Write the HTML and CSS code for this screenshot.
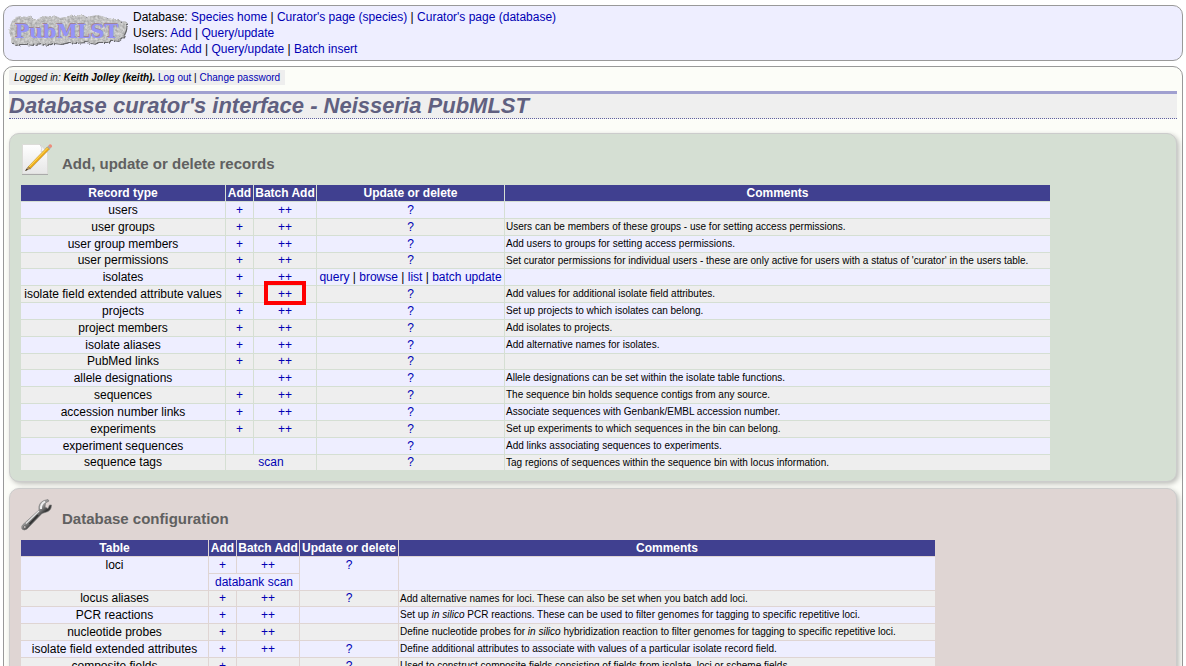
FILE: index.html
```html
<!DOCTYPE html>
<html lang="en">
<head>
<meta charset="utf-8">
<title>Database curator's interface - Neisseria PubMLST</title>
<link rel="stylesheet" href="styles.css">
</head>
<body>
<header class="banner">
  <a class="logo" href="#" aria-label="PubMLST">
    <svg width="122" height="36" viewBox="0 0 122 36">
      <defs>
        <filter id="grain" x="-5%" y="-10%" width="110%" height="125%" color-interpolation-filters="sRGB">
          <feTurbulence type="fractalNoise" baseFrequency="0.4" numOctaves="2" seed="4" result="noise"/>
          <feDisplacementMap in="SourceGraphic" in2="noise" scale="3" xChannelSelector="R" yChannelSelector="G" result="shape"/>
          <feColorMatrix in="noise" type="matrix" values="0.35 0 0 0 0.58  0.35 0 0 0 0.58  0.35 0 0 0 0.58  0 0 0 0 1" result="grey"/>
          <feComposite in="grey" in2="shape" operator="in" result="rock"/>
          <feDropShadow in="rock" dx="1" dy="1" stdDeviation="0.4" flood-color="#444" flood-opacity="0.8"/>
        </filter>
      </defs>
      <path filter="url(#grain)" d="M4 8 L8 4 13 3 19 4 22 2 25 6 30 6 34 3 44 4 48 3 52 5 60 3 67 2 75 2 79 4 88 2 94 3 99 5 105 6 110 6 113 9 117 8 119 10 118 17 115 24 110 28 104 27 100 29 90 29 86 31 78 29 67 30 61 29 53 31 45 30 39 32 32 30 24 32 18 31 12 31 7 32 3 29 3 24 1 19 2 13Z"/>
      <text class="logo-shade" x="6" y="24">PubMLST</text>
      <text class="logo-text" x="7" y="25">PubMLST</text>
    </svg>
  </a>
  <nav class="menu">
    <div>Database: <a href="#">Species home</a> | <a href="#">Curator's page (species)</a> | <a href="#">Curator's page (database)</a></div>
    <div>Users: <a href="#">Add</a> | <a href="#">Query/update</a></div>
    <div>Isolates: <a href="#">Add</a> | <a href="#">Query/update</a> | <a href="#">Batch insert</a></div>
  </nav>
</header>
<main class="content">
  <div class="login"><i>Logged in: <b>Keith Jolley (keith).</b></i> <a href="#">Log out</a> | <a href="#">Change password</a></div>
  <h1>Database curator's interface - Neisseria PubMLST</h1>

  <section class="panel curate">
    <div class="panel-head">
      <svg width="32" height="34" viewBox="0 0 32 34">
        <defs>
          <linearGradient id="paper" x1="0" y1="0" x2="0" y2="1"><stop offset="0" stop-color="#fff"/><stop offset="1" stop-color="#e6e6e6"/></linearGradient>
        </defs>
        <path d="M1.500 1.500H19L26.500 9V31H1.500Z" fill="url(#paper)" stroke="#dcdcd8"/>
        <path d="M1 31.500H27" stroke="#aaa"/>
        <path d="M19 1.500Q22 5 20 9 24 7.500 26.500 9Z" fill="#f5f5f5" stroke="#ccc" stroke-width=".7"/>
        <path d="M8 26 25 8" stroke="#777" stroke-width="3" opacity=".2"/>
        <path d="M7.200 23.800 26.300 4 28.500 6 9.400 25.500Z" fill="#f0ae18" stroke="#b47b12" stroke-width=".5"/>
        <path d="M8 23.800 26.700 4.800" stroke="#ffe36a"/>
        <path d="M4.500 27.500 7.200 23.800 9.400 25.500Z" fill="#c79a55" stroke="#79602f" stroke-width=".5"/>
        <path d="M4.200 28 5.800 25.700 6.800 26.700Z" fill="#222"/>
        <path d="M26.100 4.200 27.600 2.600 30.100 4.800 28.600 6.300Z" fill="#aaa"/>
        <path d="M27.400 2.800Q29 .4 30.700 2 32 3.500 29.900 5Z" fill="#ed8d7b"/>
      </svg>
      <h2>Add, update or delete records</h2>
    </div>
    <table class="grid records">
      <colgroup><col class="c-record"><col class="c-add"><col class="c-batch"><col class="c-update"><col class="c-comment"></colgroup>
      <thead><tr><th>Record type</th><th>Add</th><th>Batch Add</th><th>Update or delete</th><th>Comments</th></tr></thead>
      <tbody>
        <tr><td>users</td><td><a href="#">+</a></td><td><a href="#">++</a></td><td><a href="#">?</a></td><td class="note"></td></tr>
        <tr><td>user groups</td><td><a href="#">+</a></td><td><a href="#">++</a></td><td><a href="#">?</a></td><td class="note">Users can be members of these groups - use for setting access permissions.</td></tr>
        <tr><td>user group members</td><td><a href="#">+</a></td><td><a href="#">++</a></td><td><a href="#">?</a></td><td class="note">Add users to groups for setting access permissions.</td></tr>
        <tr><td>user permissions</td><td><a href="#">+</a></td><td><a href="#">++</a></td><td><a href="#">?</a></td><td class="note">Set curator permissions for individual users - these are only active for users with a status of 'curator' in the users table.</td></tr>
        <tr><td>isolates</td><td><a href="#">+</a></td><td><a href="#">++</a></td><td><a href="#">query</a> | <a href="#">browse</a> | <a href="#">list</a> | <a href="#">batch update</a></td><td class="note"></td></tr>
        <tr><td>isolate field extended attribute values</td><td><a href="#">+</a></td><td class="marked"><a href="#">++</a></td><td><a href="#">?</a></td><td class="note">Add values for additional isolate field attributes.</td></tr>
        <tr><td>projects</td><td><a href="#">+</a></td><td><a href="#">++</a></td><td><a href="#">?</a></td><td class="note">Set up projects to which isolates can belong.</td></tr>
        <tr><td>project members</td><td><a href="#">+</a></td><td><a href="#">++</a></td><td><a href="#">?</a></td><td class="note">Add isolates to projects.</td></tr>
        <tr><td>isolate aliases</td><td><a href="#">+</a></td><td><a href="#">++</a></td><td><a href="#">?</a></td><td class="note">Add alternative names for isolates.</td></tr>
        <tr><td>PubMed links</td><td><a href="#">+</a></td><td><a href="#">++</a></td><td><a href="#">?</a></td><td class="note"></td></tr>
        <tr><td>allele designations</td><td></td><td><a href="#">++</a></td><td><a href="#">?</a></td><td class="note">Allele designations can be set within the isolate table functions.</td></tr>
        <tr><td>sequences</td><td><a href="#">+</a></td><td><a href="#">++</a></td><td><a href="#">?</a></td><td class="note">The sequence bin holds sequence contigs from any source.</td></tr>
        <tr><td>accession number links</td><td><a href="#">+</a></td><td><a href="#">++</a></td><td><a href="#">?</a></td><td class="note">Associate sequences with Genbank/EMBL accession number.</td></tr>
        <tr><td>experiments</td><td><a href="#">+</a></td><td><a href="#">++</a></td><td><a href="#">?</a></td><td class="note">Set up experiments to which sequences in the bin can belong.</td></tr>
        <tr><td>experiment sequences</td><td></td><td></td><td><a href="#">?</a></td><td class="note">Add links associating sequences to experiments.</td></tr>
        <tr><td>sequence tags</td><td colspan="2"><a href="#">scan</a></td><td><a href="#">?</a></td><td class="note">Tag regions of sequences within the sequence bin with locus information.</td></tr>
      </tbody>
    </table>
  </section>

  <section class="panel config">
    <div class="panel-head">
      <svg width="32" height="34" viewBox="0 0 32 34">
        <defs>
          <linearGradient id="steel" x1="0" y1="0" x2="1" y2="1"><stop offset="0" stop-color="#eee"/><stop offset=".45" stop-color="#999"/><stop offset=".6" stop-color="#333"/><stop offset="1" stop-color="#bbb"/></linearGradient>
        </defs>
        <path d="M18 12Q17 5 23 2.500L27 1.500 28 3 24.500 5 24 9 27 10.500 28.500 7 30.500 7Q30.500 12 27 13.500L21 15.500 6 31Q3 33 1 31 0 28 2 26.500Z" fill="url(#steel)" stroke="#777" stroke-width=".6"/>
        <path d="M18 13 5 25.500" stroke="#e4e4e4" stroke-width="1.200"/>
        <path d="M17 17 8.500 26" stroke="#333" stroke-width="1.800"/>
        <path d="M20 11Q19.500 6 24 3.500" stroke="#eee" stroke-width="2" fill="none"/>
        <circle cx="3.800" cy="29" r="1.300" fill="#dfd6d4" stroke="#555" stroke-width=".7"/>
      </svg>
      <h2>Database configuration</h2>
    </div>
    <table class="grid tables">
      <colgroup><col class="c-table"><col class="c-add"><col class="c-batch"><col class="c-edit"><col class="c-detail"></colgroup>
      <thead><tr><th>Table</th><th>Add</th><th>Batch Add</th><th>Update or delete</th><th>Comments</th></tr></thead>
      <tbody>
        <tr class="light"><td rowspan="2">loci</td><td><a href="#">+</a></td><td><a href="#">++</a></td><td rowspan="2"><a href="#">?</a></td><td class="note" rowspan="2"></td></tr>
        <tr class="light"><td colspan="2"><a href="#">databank scan</a></td></tr>
        <tr><td>locus aliases</td><td><a href="#">+</a></td><td><a href="#">++</a></td><td><a href="#">?</a></td><td class="note">Add alternative names for loci. These can also be set when you batch add loci.</td></tr>
        <tr class="light"><td>PCR reactions</td><td><a href="#">+</a></td><td><a href="#">++</a></td><td></td><td class="note">Set up <i>in silico</i> PCR reactions. These can be used to filter genomes for tagging to specific repetitive loci.</td></tr>
        <tr><td>nucleotide probes</td><td><a href="#">+</a></td><td><a href="#">++</a></td><td></td><td class="note">Define nucleotide probes for <i>in silico</i> hybridization reaction to filter genomes for tagging to specific repetitive loci.</td></tr>
        <tr class="light"><td>isolate field extended attributes</td><td><a href="#">+</a></td><td><a href="#">++</a></td><td><a href="#">?</a></td><td class="note">Define additional attributes to associate with values of a particular isolate record field.</td></tr>
        <tr><td>composite fields</td><td><a href="#">+</a></td><td></td><td><a href="#">?</a></td><td class="note">Used to construct composite fields consisting of fields from isolate, loci or scheme fields.</td></tr>
      </tbody>
    </table>
  </section>
</main>
</body>
</html>
```
FILE: styles.css
```css
body {
  margin: 5px 3px 0;
  background: #fff;
  color: #000;
  font-family: "Liberation Sans", Arial, sans-serif;
  font-size: 12px;
  line-height: 16px;
}
a { color: #0000b4; text-decoration: none; }
.banner {
  display: flex;
  padding: 3px 5px 3px 4px;
  border: 1px solid #999;
  border-radius: 10px;
  background: #eef;
}
.logo { width: 125px; padding-top: 4px; }
.logo svg { display: block; }
.logo-text, .logo-shade {
  font: bold 19px "DejaVu Serif", serif;
  fill: #9494f8;
}
.logo-shade { fill: #a08494; }
.content {
  margin-top: 5px;
  padding: 3px 5px 40px;
  border: 1px solid #999;
  border-radius: 10px 10px 0 0;
  background: #fcfdf8;
}
.login {
  width: fit-content;
  padding: 0 5px;
  background: #eee;
  font-size: 10px;
  line-height: 15px;
}
h1 {
  margin: 6px 0 14px;
  border-top: 3px solid #a0a0d0;
  border-bottom: 1px dotted #6060a0;
  background: #efefef;
  color: #606080;
  font-size: 22px;
  font-style: italic;
  line-height: 24px;
}
.panel {
  margin-bottom: 6px;
  padding: 9px 11px 10px;
  border: 1px solid #ccc;
  border-radius: 10px;
  box-shadow: 2px 2px 5px rgba(0, 0, 0, 0.25);
}
.curate { background: #d5dfd3; }
.config { background: #dfd5d3; }
.panel-head { display: flex; align-items: flex-end; gap: 9px; margin-bottom: 7px; }
h2 {
  margin: 0;
  color: #606060;
  font-size: 15px;
  line-height: 26px;
}
.grid {
  table-layout: fixed;
  border-spacing: 1px;
  margin-left: -1px;
}
.records { width: 1031px; }
.tables { width: 916px; }
.c-record { width: 204px; }
.c-table { width: 187px; }
.c-add { width: 27px; }
.c-batch { width: 62px; }
.c-update { width: 187px; }
.c-edit { width: 98px; }
.grid th, .grid td {
  padding: 0;
  text-align: center;
  vertical-align: top;
  white-space: nowrap;
}
.grid th { background: #404090; color: #fff; }
.grid tr { background: #eee; }
.records tbody tr:nth-child(odd), .grid .light { background: #eef; }
.records tbody tr:nth-child(6n+4) td, .tables tbody tr:nth-child(6n+3) td { line-height: 15px; }
.grid .note {
  padding-left: 1px;
  font-size: 10px;
  text-align: left;
  vertical-align: middle;
}
.marked { position: relative; }
.marked::after {
  content: "";
  position: absolute;
  inset: -5px 10px -3px;
  border: 4px solid #f00;
}
```
